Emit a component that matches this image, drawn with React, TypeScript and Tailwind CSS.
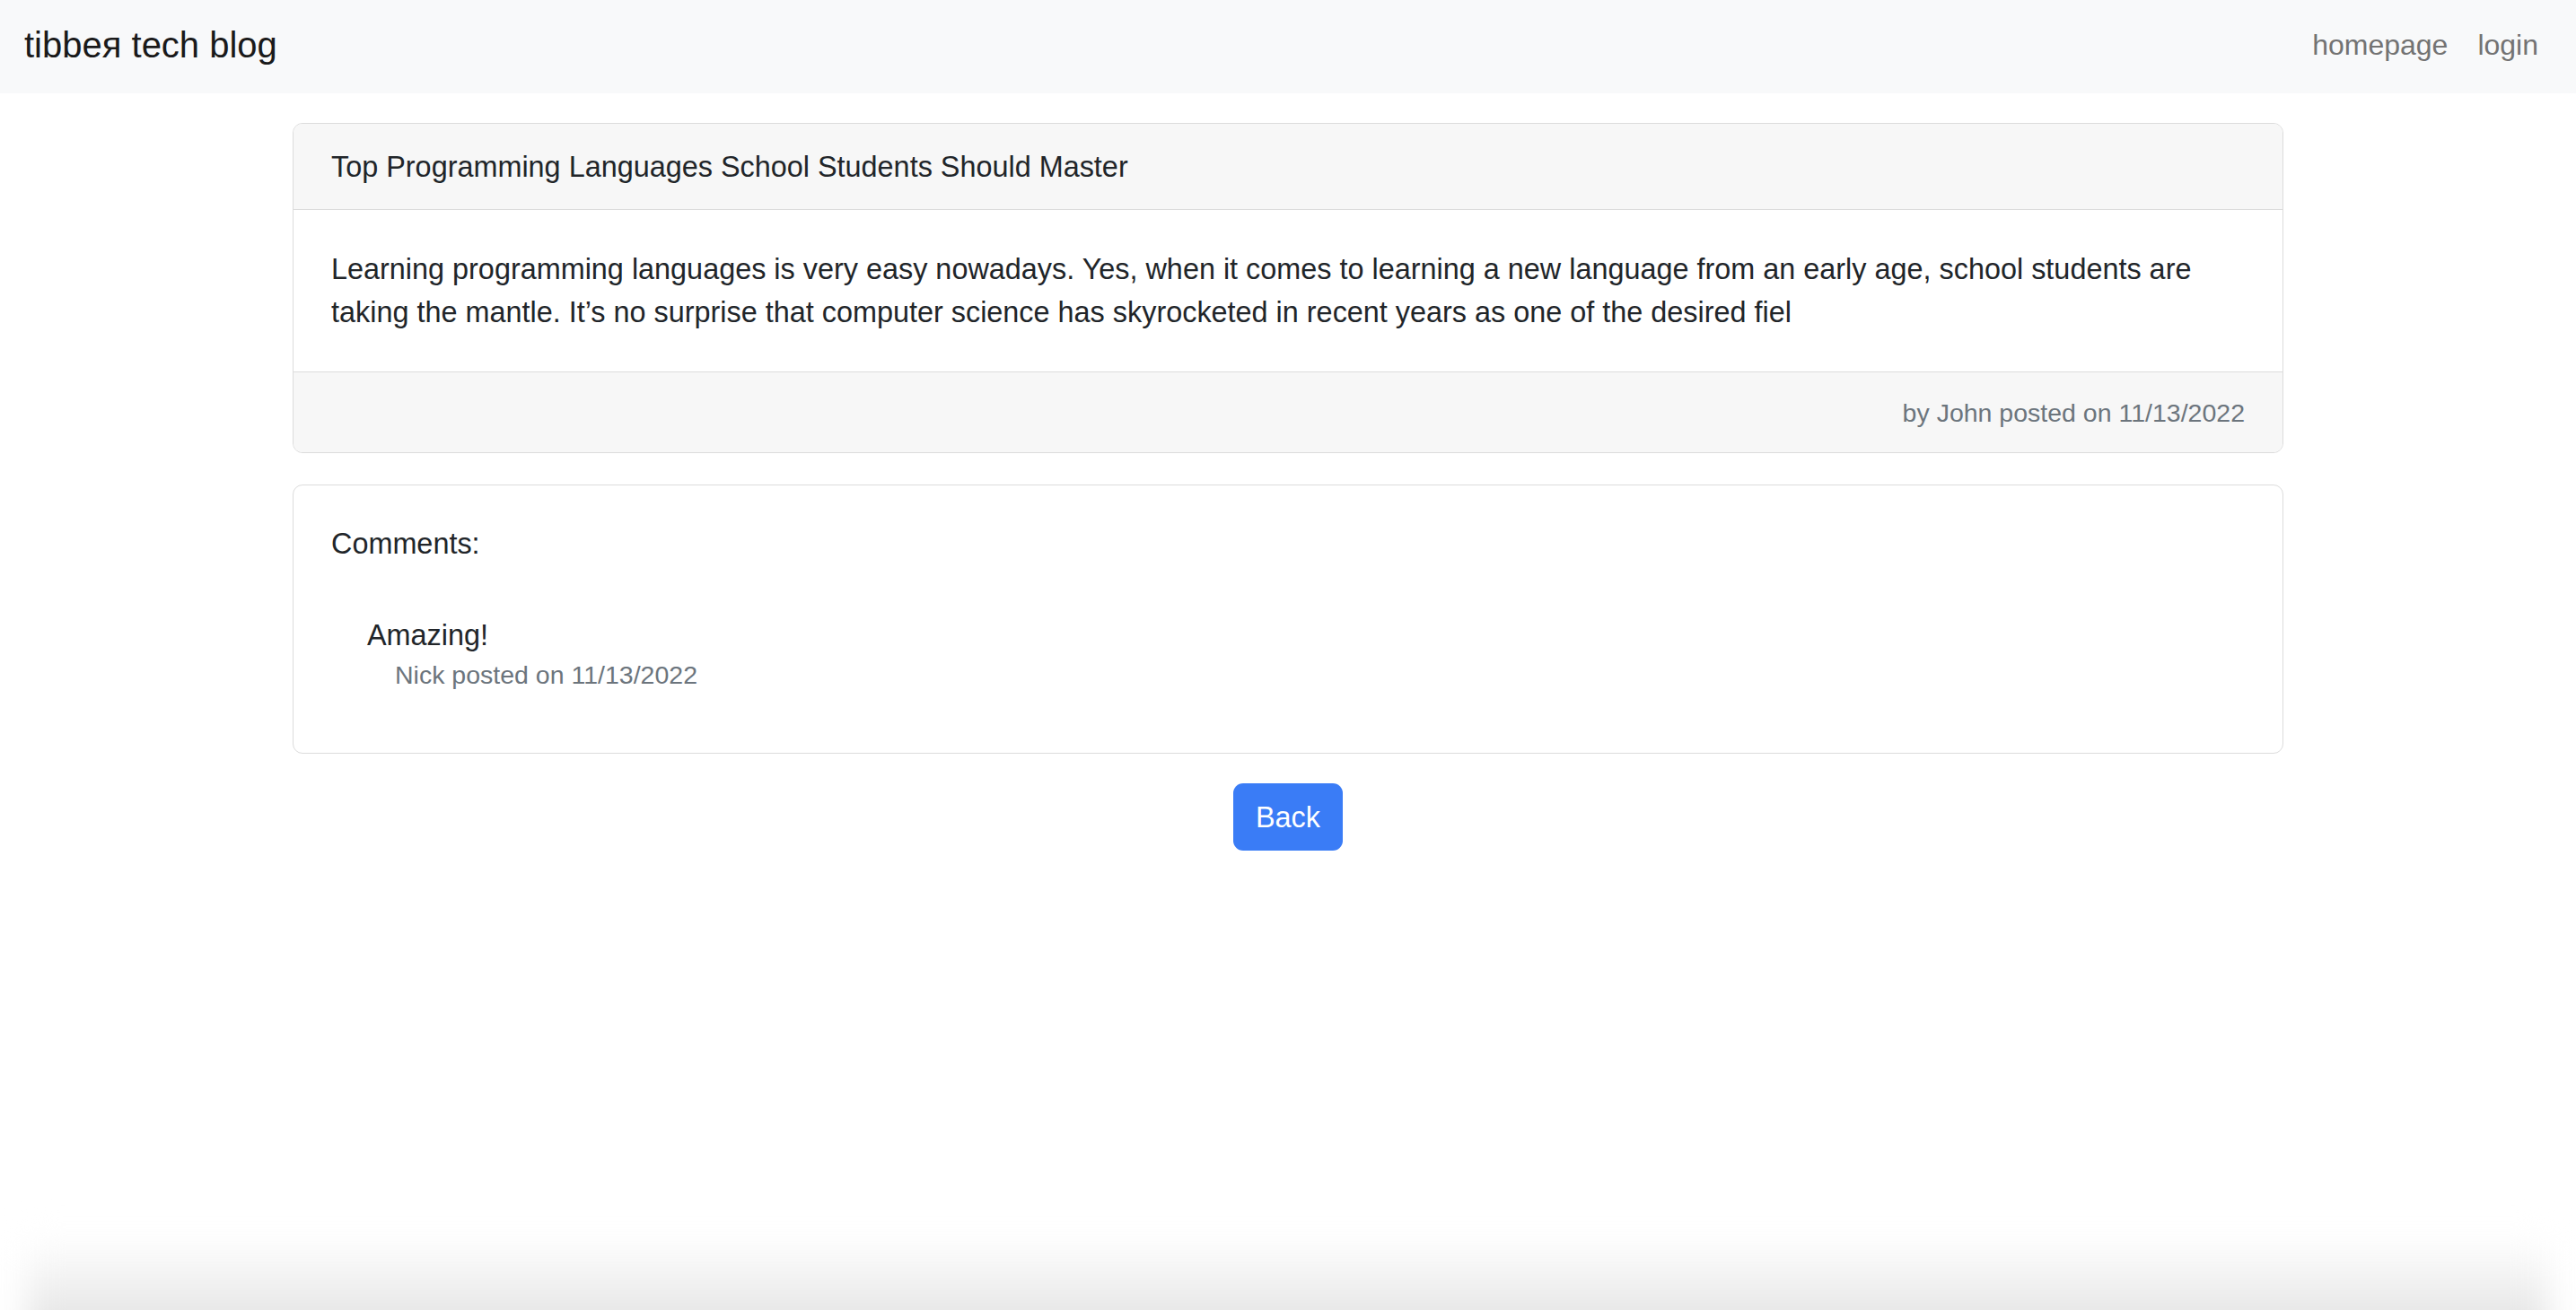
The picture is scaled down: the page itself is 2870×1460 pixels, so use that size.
const post = {
  title: "Top Programming Languages School Students Should Master",
  body: "Learning programming languages is very easy nowadays. Yes, when it comes to learning a new language from an early age, school students are taking the mantle. It\u2019s no surprise that computer science has skyrocketed in recent years as one of the desired fiel",
  author: "John",
  date: "11/13/2022",
};

const comments = [{ text: "Amazing!", author: "Nick", date: "11/13/2022" }];

export default function App() {
  return (
    <div className="h-[1460px] overflow-hidden flex flex-col bg-white text-[#212529] font-['Liberation_Sans',Arial,sans-serif] text-[32.4px] leading-[48px]">
      <nav className="h-[104px] shrink-0 bg-[#f8f9fa] flex items-center justify-between pl-[27px] pr-[42px]">
        <a href="/" className="text-[40px] leading-[60px] text-[#1a1a1a] -mt-[4px]">tibbeя tech blog</a>
        <div className="flex items-center gap-[33px] text-[32px] text-[#737373] -mt-[4px]">
          <a href="/">homepage</a>
          <a href="/login">login</a>
        </div>
      </nav>

      <main className="w-[2218px] mx-auto mt-[33px] flex flex-col">
        <div className="border border-[#dcdcdc] rounded-[11px] overflow-hidden">
          <div className="bg-[#f7f7f7] border-b border-[#dcdcdc] h-[96px] px-[42px] flex items-center">
            {post.title}
          </div>
          <div className="px-[42px] py-[42px] h-[180px]">
            <p>{post.body}</p>
          </div>
          <div className="bg-[#f7f7f7] border-t border-[#dcdcdc] h-[90px] px-[42px] flex items-center justify-end text-[28.5px] text-[#6c757d]">
            by {post.author} posted on {post.date}
          </div>
        </div>

        <div className="mt-[35px] border border-[#dcdcdc] rounded-[11px] px-[42px] pt-[41px] pb-[63px]">
          <p>Comments:</p>
          {comments.map((c) => (
            <div key={c.text} className="mt-[58px] pl-[40px]">
              <p className="leading-[40px]">{c.text}</p>
              <p className="pl-[31px] text-[28.5px] text-[#6c757d]">
                {c.author} posted on {c.date}
              </p>
            </div>
          ))}
        </div>

        <div className="mt-[33px] flex justify-center">
          <button className="h-[75px] px-[25px] rounded-[11px] bg-[#3a7cf6] text-white">Back</button>
        </div>
      </main>

      <div className="mt-auto shrink-0 h-[140px] -mb-[60px] mx-[30px] bg-gradient-to-b from-white to-[#d8d8d8] blur-[18px]" />
    </div>
  );
}
